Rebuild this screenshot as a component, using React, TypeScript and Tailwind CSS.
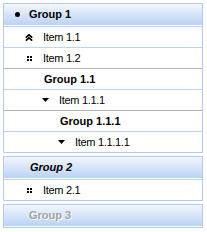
import React from "react";

const font = { fontFamily: '"Liberation Sans", Arial, sans-serif' };

function Bullet() {
  return (
    <svg width="5" height="5" viewBox="0 0 5 5" className="block">
      <circle cx="2.5" cy="2.5" r="2.5" fill="#000" />
    </svg>
  );
}

function DoubleUp() {
  return (
    <svg width="8" height="7" viewBox="0 0 8 7" className="block">
      <path d="M0.8 3.6 L4 0.8 L7.2 3.6" fill="none" stroke="#000" strokeWidth="1.7" />
      <path d="M0.8 6.6 L4 3.8 L7.2 6.6" fill="none" stroke="#000" strokeWidth="1.7" />
    </svg>
  );
}

function Dots() {
  return (
    <svg width="5" height="5" viewBox="0 0 5 5" className="block">
      <rect x="0" y="0" width="2" height="2" fill="#000" />
      <rect x="3" y="0" width="2" height="2" fill="#000" />
      <rect x="0" y="3" width="2" height="2" fill="#000" />
      <rect x="3" y="3" width="2" height="2" fill="#000" />
    </svg>
  );
}

function TriDown() {
  return (
    <svg width="7" height="4" viewBox="0 0 7 4" className="block">
      <polygon points="0,0 7,0 3.5,4" fill="#000" />
    </svg>
  );
}

function Header({ children }: { children: React.ReactNode }) {
  return (
    <div className="h-[22px] flex items-center border-b border-white bg-gradient-to-b from-[#f3f7fe] to-[#bad2f4]">
      {children}
    </div>
  );
}

function Row({
  line,
  children,
}: {
  line: "blue" | "gray";
  children: React.ReactNode;
}) {
  return (
    <div
      className={
        "h-[21px] flex items-center border-t bg-white " +
        (line === "blue" ? "border-[#bdd3f2]" : "border-[#b4b4b4]")
      }
    >
      {children}
    </div>
  );
}

export default function App() {
  return (
    <div className="bg-white w-[207px] h-[232px] pt-[3px] pl-[3px] text-[11px] text-black" style={font}>
      {/* Panel 1 */}
      <div className="w-[200px] border border-[#b3cbee]">
        <Header>
          <div className="w-[25px] flex justify-center pl-[1px]">
            <Bullet />
          </div>
          <span className="font-bold">Group 1</span>
        </Header>
        <Row line="blue">
          <div className="pl-[21px] w-[39px]">
            <DoubleUp />
          </div>
          <span className="tracking-[-0.3px]">Item 1.1</span>
        </Row>
        <Row line="blue">
          <div className="pl-[23px] w-[39px]">
            <Dots />
          </div>
          <span className="tracking-[-0.3px]">Item 1.2</span>
        </Row>
        <Row line="gray">
          <span className="font-bold pl-[40px]">Group 1.1</span>
        </Row>
        <Row line="blue">
          <div className="pl-[38px] w-[55px]">
            <TriDown />
          </div>
          <span className="tracking-[-0.3px]">Item 1.1.1</span>
        </Row>
        <Row line="gray">
          <span className="font-bold pl-[56px]">Group 1.1.1</span>
        </Row>
        <Row line="blue">
          <div className="pl-[54px] w-[71px]">
            <TriDown />
          </div>
          <span className="tracking-[-0.3px]">Item 1.1.1.1</span>
        </Row>
      </div>

      {/* Panel 2 */}
      <div className="w-[200px] border border-[#b3cbee] mt-[3px]">
        <Header>
          <span className="font-bold italic pl-[26px]">Group 2</span>
        </Header>
        <Row line="blue">
          <div className="pl-[23px] w-[39px]">
            <Dots />
          </div>
          <span className="tracking-[-0.3px]">Item 2.1</span>
        </Row>
      </div>

      {/* Panel 3 */}
      <div className="w-[200px] border border-[#b3cbee] mt-[3px]">
        <Header>
          <span className="font-bold pl-[25px] text-[#a3a3a3] [text-shadow:1px_1px_0_#ffffff]">Group 3</span>
        </Header>
      </div>
    </div>
  );
}
